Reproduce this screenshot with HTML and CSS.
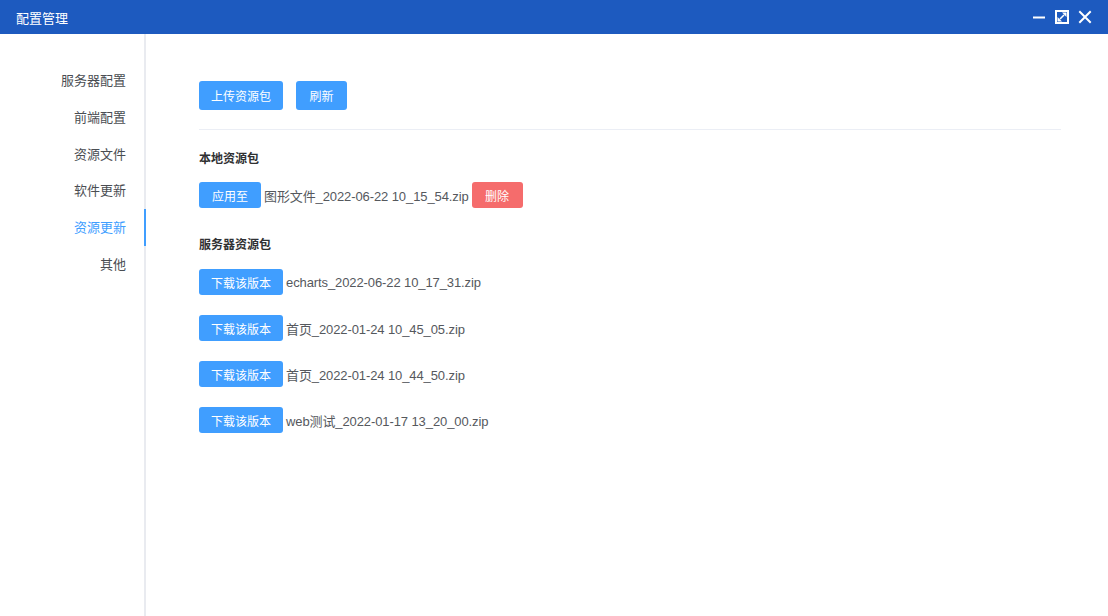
FILE: index.html
```html
<!DOCTYPE html>
<html lang="zh">
<head>
<meta charset="utf-8">
<title>配置管理</title>
<link rel="stylesheet" href="styles.css">
</head>
<body>
<div class="window">
  <header class="titlebar">
    <span class="title">配置管理</span>
    <div class="win-actions">
      <svg class="win-icon" width="14" height="14" viewBox="0 0 14 14"><rect x="1" y="6.5" width="12" height="2" fill="#fff"/></svg>
      <svg class="win-icon" width="14" height="14" viewBox="0 0 14 14"><path d="M1 1h12v12H1z" fill="none" stroke="#fff" stroke-width="2"/><path d="M7 2.5h4.5V7z" fill="#fff"/><path d="M2.5 7V11.5H7z" fill="#fff"/><path d="M5 9l4-4" stroke="#fff" stroke-width="1.6"/></svg>
      <svg class="win-icon" width="14" height="14" viewBox="0 0 14 14"><path d="M2 2l10 10M12 2L2 12" stroke="#fff" stroke-width="2" stroke-linecap="square"/></svg>
    </div>
  </header>
  <div class="body">
    <nav class="sidebar">
      <div class="nav-item">服务器配置</div>
      <div class="nav-item">前端配置</div>
      <div class="nav-item">资源文件</div>
      <div class="nav-item">软件更新</div>
      <div class="nav-item active">资源更新</div>
      <div class="nav-item">其他</div>
    </nav>
    <main class="content">
      <div class="toolbar">
        <button class="btn btn-primary btn-lg">上传资源包</button>
        <button class="btn btn-primary btn-lg btn-narrow">刷新</button>
      </div>
      <div class="divider"></div>
      <h3 class="section-title first">本地资源包</h3>
      <div class="file-row">
        <button class="btn btn-primary btn-apply">应用至</button>
        <span class="file-name">图形文件_2022-06-22 10_15_54.zip</span>
        <button class="btn btn-danger">删除</button>
      </div>
      <h3 class="section-title">服务器资源包</h3>
      <div class="file-list">
        <div class="file-row">
          <button class="btn btn-primary btn-dl">下载该版本</button>
          <span class="file-name">echarts_2022-06-22 10_17_31.zip</span>
        </div>
        <div class="file-row">
          <button class="btn btn-primary btn-dl">下载该版本</button>
          <span class="file-name">首页_2022-01-24 10_45_05.zip</span>
        </div>
        <div class="file-row">
          <button class="btn btn-primary btn-dl">下载该版本</button>
          <span class="file-name">首页_2022-01-24 10_44_50.zip</span>
        </div>
        <div class="file-row">
          <button class="btn btn-primary btn-dl">下载该版本</button>
          <span class="file-name">web测试_2022-01-17 13_20_00.zip</span>
        </div>
      </div>
    </main>
  </div>
</div>
</body>
</html>
```
FILE: styles.css
```css
* { box-sizing: border-box; }
html, body { margin: 0; padding: 0; }
body {
  font-family: "Microsoft YaHei", "Noto Sans CJK SC", "Liberation Sans", sans-serif;
  background: #fff;
  width: 1108px;
  height: 616px;
  overflow: hidden;
}
.window { display: flex; flex-direction: column; height: 616px; }
.titlebar {
  height: 34px;
  background: #1d5abf;
  display: flex;
  align-items: center;
  justify-content: space-between;
  padding: 0 16px;
  color: #fff;
}
.title { font-size: 13px; letter-spacing: 0; }
.win-actions { display: flex; gap: 9px; align-items: center; }
.win-icon { display: block; }
.body { flex: 1; display: flex; }
.sidebar {
  width: 146px;
  border-right: 2px solid #e9ebf0;
  padding-top: 28px;
}
.nav-item {
  height: 36.8px;
  line-height: 36.8px;
  text-align: right;
  padding-right: 18px;
  font-size: 13px;
  color: #4a4d52;
  margin-right: -2px;
  border-right: 2px solid transparent;
}
.nav-item.active { color: #409eff; border-right-color: #409eff; }
.content { flex: 1; padding: 47px 47px 0 53px; }
.toolbar { display: flex; gap: 13px; }
.btn {
  border: none;
  border-radius: 3px;
  color: #fff;
  font-family: inherit;
  font-size: 12px;
  height: 26px;
  padding: 0;
  cursor: pointer;
  flex: none;
}
.btn-lg { height: 29px; width: 84px; }
.btn-narrow { width: 51px; }
.btn-primary { background: #409eff; }
.btn-apply { width: 62px; }
.btn-danger { background: #f56c6c; width: 51px; }
.btn-dl { width: 84px; }
.divider { height: 1px; background: #ebeef5; margin-top: 19px; }
.section-title {
  margin: 26px 0 0;
  font-size: 12px;
  font-weight: bold;
  color: #303133;
  line-height: 20px;
  height: 20px;
}
.section-title.first { margin-top: 18px; }
.file-row {
  display: flex;
  align-items: center;
  gap: 3px;
  margin-top: 14px;
}
.file-list { display: flex; flex-direction: column; gap: 20px; margin-top: 15px; }
.file-list .file-row { margin-top: 0; }
.file-name {
  font-size: 13px;
  color: #55585d;
  letter-spacing: -0.1px;
  font-family: "Liberation Sans", "Noto Sans CJK SC", sans-serif;
}
```
